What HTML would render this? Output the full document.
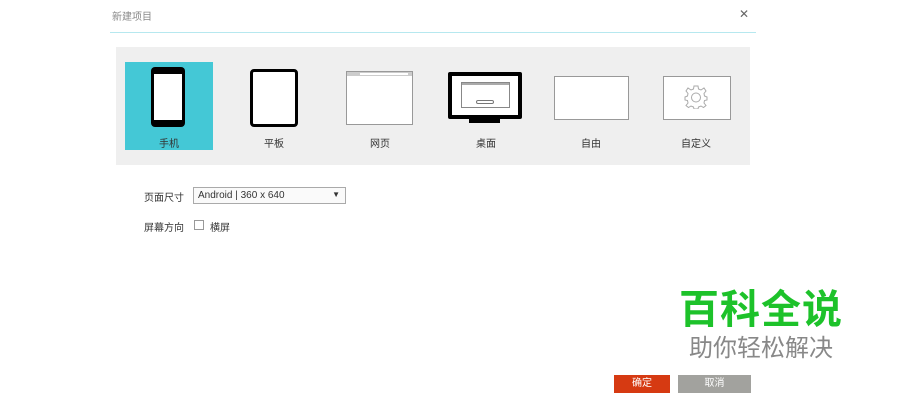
<!DOCTYPE html>
<html><head><meta charset="utf-8"><style>
*{margin:0;padding:0;box-sizing:border-box}
body{width:900px;height:400px;background:#fff;position:relative;overflow:hidden;font-family:"Liberation Sans","Noto Sans CJK SC",sans-serif;color:#333}
.a{position:absolute}
.lbl{position:absolute;top:135px;font-size:10px;width:60px;text-align:center;color:#333}
</style></head><body>
<div class="a" style="left:112px;top:8px;font-size:10px;color:#888">新建项目</div>
<div class="a" style="left:739px;top:7px;font-size:12px;color:#666">✕</div>
<div class="a" style="left:110px;top:32px;width:646px;height:1px;background:#b6e8ef"></div>
<div class="a" style="left:116px;top:47px;width:634px;height:118px;background:#efefef"></div>
<div class="a" style="left:125px;top:62px;width:88px;height:88px;background:#44c8d6"></div>
<div class="a" style="left:151px;top:67px;width:34px;height:60px;background:#000;border-radius:4px"></div>
<div class="a" style="left:154px;top:74px;width:28px;height:46px;background:#fff"></div>
<div class="a" style="left:250px;top:69px;width:48px;height:58px;border:3px solid #000;border-radius:4px;background:#fff"></div>
<div class="a" style="left:346px;top:71px;width:67px;height:54px;border:1px solid #999;background:#fff"></div>
<div class="a" style="left:347px;top:72px;width:65px;height:4px;background:#ccc"></div>
<div class="a" style="left:360px;top:73px;width:48px;height:2px;background:#fff"></div>
<div class="a" style="left:448px;top:72px;width:74px;height:47px;border:4px solid #000;border-radius:2px;background:#fff"></div>
<div class="a" style="left:469px;top:119px;width:31px;height:4px;background:#000"></div>
<div class="a" style="left:461px;top:82px;width:49px;height:26px;border:1px solid #888;background:#fff"></div>
<div class="a" style="left:462px;top:83px;width:47px;height:2px;background:#aaa"></div>
<div class="a" style="left:476px;top:100px;width:18px;height:4px;border:1px solid #777;border-radius:2px"></div>
<div class="a" style="left:554px;top:76px;width:75px;height:44px;border:1px solid #999;background:#fff"></div>
<div class="a" style="left:663px;top:76px;width:68px;height:44px;border:1px solid #999;background:#fff"></div>
<svg class="a" style="left:683px;top:85px" width="26" height="24" viewBox="-13 -12 26 24"><g fill="none" stroke="#aaa" stroke-width="1">
<path d="M-2,-11 L2,-11 L2.5,-8 L5,-7 L8,-9 L10,-6 L8,-3.5 L8.5,-1 L11,0 L11,3 L8.5,3.5 L8,6 L10,8.5 L7.5,10.5 L5,9 L2.5,10 L2,12 L-2,12 L-2.5,10 L-5,9 L-7.5,10.5 L-10,8.5 L-8,6 L-8.5,3.5 L-11,3 L-11,0 L-8.5,-1 L-8,-3.5 L-10,-6 L-8,-9 L-5,-7 L-2.5,-8 Z"/>
<circle cx="0" cy="0.5" r="4.5"/></g></svg>
<div class="lbl" style="left:139px">手机</div>
<div class="lbl" style="left:244px">平板</div>
<div class="lbl" style="left:350px">网页</div>
<div class="lbl" style="left:456px">桌面</div>
<div class="lbl" style="left:561px">自由</div>
<div class="lbl" style="left:666px">自定义</div>
<div class="a" style="left:144px;top:189px;font-size:10px">页面尺寸</div>
<div class="a" style="left:193px;top:187px;width:153px;height:17px;border:1px solid #aaa;background:#fafafa;font-size:10px;padding:2px 0 0 4px">Android | 360 x 640<span style="position:absolute;right:5px;top:2px;font-size:8px">▼</span></div>
<div class="a" style="left:144px;top:219px;font-size:10px">屏幕方向</div>
<div class="a" style="left:194px;top:220px;width:10px;height:10px;border:1px solid #999;background:#fff"></div>
<div class="a" style="left:210px;top:219px;font-size:10px">横屏</div>
<div class="a" style="left:679px;top:285px;font-size:40px;font-weight:bold;color:#1dc22a;letter-spacing:1px;line-height:50px">百科全说</div>
<div class="a" style="left:689px;top:334px;font-size:24px;color:#888;line-height:30px">助你轻松解决</div>
<div class="a" style="left:614px;top:375px;width:56px;height:18px;background:#d63a12;color:#fff;font-size:10px;text-align:center;line-height:18px">确定</div>
<div class="a" style="left:678px;top:375px;width:73px;height:18px;background:#a2a29e;color:#fff;font-size:10px;text-align:center;line-height:18px">取消</div>
</body></html>
